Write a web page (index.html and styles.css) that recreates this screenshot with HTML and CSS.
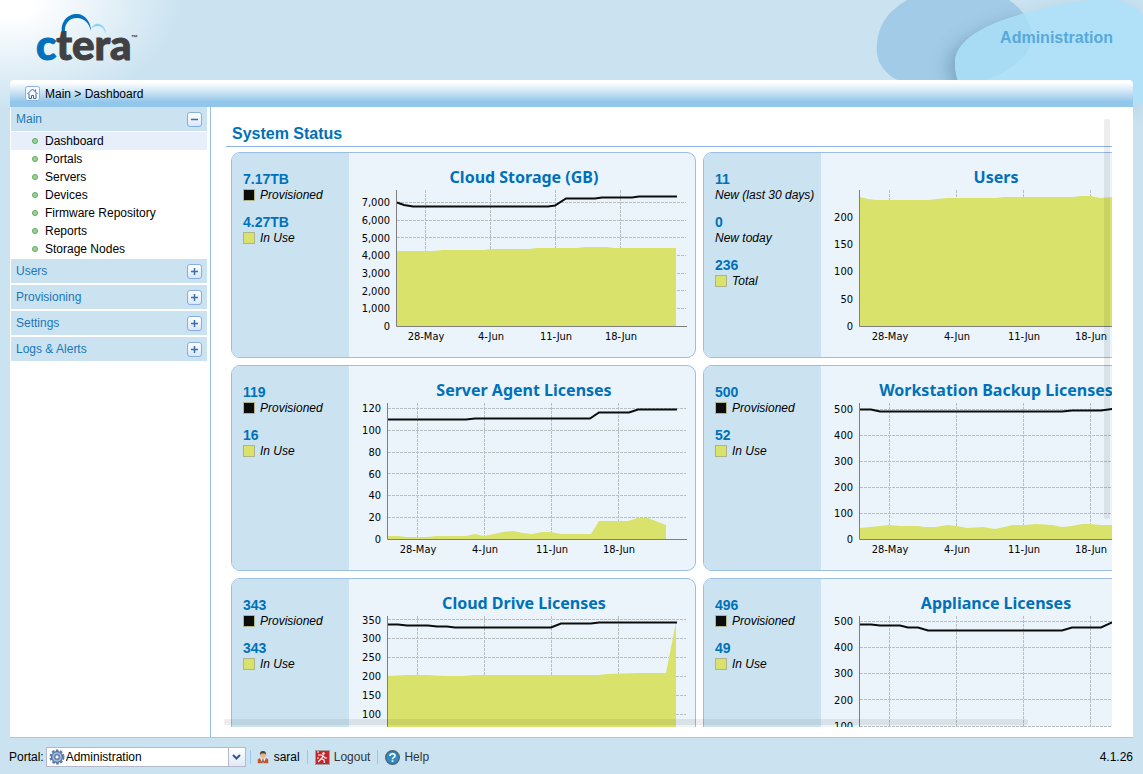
FILE: index.html
```html
<!DOCTYPE html>
<html lang="en">
<head>
<meta charset="utf-8">
<title>Administration - Dashboard</title>
<link rel="stylesheet" href="styles.css">
</head>
<body>
<svg class="backdrop" viewBox="0 0 849 510" aria-hidden="true">
  <defs>
    <clipPath id="rear"><path d="M50 150C50 70 90 25 160 -10H430C490 20 520 80 517 120C500 190 420 230 330 255L140 250C80 235 50 190 50 150Z"/></clipPath>
    <filter id="soft" x="-30%" y="-30%" width="160%" height="160%"><feGaussianBlur stdDeviation="26"/></filter>
  </defs>
  <path d="M285 190C285 130 350 80 495 40C600 10 700 -5 760 0C800 5 830 25 849 45V340H330C300 260 285 230 285 190Z" fill="#8ab4cf" opacity=".3" filter="url(#soft)"/>
  <path d="M50 150C50 70 90 25 160 -10H430C490 20 520 80 517 120C500 190 420 230 330 255L140 250C80 235 50 190 50 150Z" fill="#a2cbe7"/>
  <g clip-path="url(#rear)"><path d="M265 200C265 140 350 95 495 55V340H330C290 270 265 240 265 200Z" fill="#6f9db5" opacity=".8" filter="url(#soft)"/></g>
  <path d="M285 190C285 130 350 80 495 40C600 10 700 -5 760 0C800 5 830 25 849 45V306L819 318L600 340H330C300 260 285 230 285 190Z" fill="#b0e1f8"/>
  <g clip-path="url(#rear)"><path d="M285 190C285 130 350 80 495 40C600 10 700 -5 760 0V340H330C300 260 285 230 285 190Z" fill="#a8dcf4"/></g>
</svg>

<header class="top">
  <svg class="logo" width="110" height="76" viewBox="34 0 110 76" role="img" aria-label="ctera">
    <path d="M62 34C60 22 67 14 77 14C85 14 91 22 91 31C89 23 84 18 77 18C69 18 64 24 65 33Z" fill="#0071bc"/>
    <path d="M91 29C93 25 96 23 99 24C103 25 106 29 106 34C104 28 101 26 98 26C95 26 93 27 91 29Z" fill="#87d3f6"/>
    <text x="36" y="60" class="logo-text"><tspan fill="#0071bc" stroke="#0071bc">c</tspan><tspan fill="#414042" stroke="#414042">tera</tspan></text>
    <text x="131" y="40" class="logo-tm">™</text>
  </svg>
  <h1 class="product">Administration</h1>
</header>

<div class="frame">
  <nav class="crumbs" aria-label="Breadcrumb">
    <svg width="16" height="16" viewBox="0 0 16 16" aria-hidden="true">
      <rect x=".5" y=".5" width="14" height="14" rx="2" fill="#f4f9ff" stroke="#8db2e3"/>
      <path d="M2.500 8L7.500 3L12.500 8M4 7.500V12.500H6.500V9.500H8.500V12.500H11V7.500M10.500 5.500V3.500" fill="none" stroke="#3f6ba5"/>
    </svg>
    <span>Main &gt; Dashboard</span>
  </nav>

  <div class="body">
    <nav class="side" aria-label="Sections">
      <section>
        <h2>Main <button type="button" aria-label="Collapse Main"><svg width="15" height="15" viewBox="0 0 15 15"><path d="M4 7.500H11" stroke="#3c6ea8" stroke-width="1.500"/></svg></button></h2>
        <ul>
          <li class="on"><a href="#">Dashboard</a></li>
          <li><a href="#">Portals</a></li>
          <li><a href="#">Servers</a></li>
          <li><a href="#">Devices</a></li>
          <li><a href="#">Firmware Repository</a></li>
          <li><a href="#">Reports</a></li>
          <li><a href="#">Storage Nodes</a></li>
        </ul>
      </section>
      <section><h2>Users <button type="button" aria-label="Expand Users"><svg width="15" height="15" viewBox="0 0 15 15"><path d="M4 7.500H11M7.500 4V11" stroke="#3c6ea8" stroke-width="1.500"/></svg></button></h2></section>
      <section><h2>Provisioning <button type="button" aria-label="Expand Provisioning"><svg width="15" height="15" viewBox="0 0 15 15"><path d="M4 7.500H11M7.500 4V11" stroke="#3c6ea8" stroke-width="1.500"/></svg></button></h2></section>
      <section><h2>Settings <button type="button" aria-label="Expand Settings"><svg width="15" height="15" viewBox="0 0 15 15"><path d="M4 7.500H11M7.500 4V11" stroke="#3c6ea8" stroke-width="1.500"/></svg></button></h2></section>
      <section><h2>Logs &amp; Alerts <button type="button" aria-label="Expand Logs and Alerts"><svg width="15" height="15" viewBox="0 0 15 15"><path d="M4 7.500H11M7.500 4V11" stroke="#3c6ea8" stroke-width="1.500"/></svg></button></h2></section>
    </nav>

    <main class="content">
      <div class="scroll">
        <h2 class="heading">System Status</h2>
        <div class="panels">

          <article class="panel">
            <dl class="legend">
              <div><dt>7.17TB</dt><dd><i class="swatch black"></i>Provisioned</dd></div>
              <div><dt>4.27TB</dt><dd><i class="swatch"></i>In Use</dd></div>
            </dl>
            <svg class="chart" viewBox="0 0 346 204">
              <text class="title" x="175" y="30">Cloud Storage (GB)</text>
              <path class="grid" d="M48 49.500H337M48 67.500H337M48 84.500H337M48 102.500H337M48 120.500H337M48 137.500H337M48 155.500H337M76.500 37V173M141.500 37V173M206.500 37V173M271.500 37V173"/>
              <path class="area" d="M48 173V98H84L94 97H134L142 96H180L188 95H228L236 94H257L265 95H327V173Z"/>
              <path class="line" d="M48 49.500L55 52L64 53.500H199L206 52.500L217 45.500H246L253 44.500H283L290 43.500H328"/>
              <path class="axis" d="M47.500 37V173.500H338"/>
              <g class="ylab"><text x="41" y="53">7,000</text><text x="41" y="71">6,000</text><text x="41" y="89">5,000</text><text x="41" y="106">4,000</text><text x="41" y="124">3,000</text><text x="41" y="142">2,000</text><text x="41" y="159">1,000</text><text x="41" y="177">0</text></g>
              <g class="xlab"><text x="77" y="187">28-May</text><text x="142" y="187">4-Jun</text><text x="207" y="187">11-Jun</text><text x="272" y="187">18-Jun</text></g>
            </svg>
          </article>

          <article class="panel">
            <dl class="legend">
              <div><dt>11</dt><dd>New (last 30 days)</dd></div>
              <div><dt>0</dt><dd>New today</dd></div>
              <div><dt>236</dt><dd><i class="swatch"></i>Total</dd></div>
            </dl>
            <svg class="chart" viewBox="0 0 346 204">
              <text class="title" x="175" y="30">Users</text>
              <path class="grid" d="M68.500 37V173M135.500 37V173M202.500 37V173M269.500 37V173"/>
              <path class="area" d="M39 173V44L47 46L56 47H107L126 45H175L183 44H252L260 43H270L279 45L291 44H327V173Z"/>
              <path class="axis" d="M38.500 37V173.500H338"/>
              <g class="ylab"><text x="32" y="68">200</text><text x="32" y="95">150</text><text x="32" y="122">100</text><text x="32" y="150">50</text><text x="32" y="177">0</text></g>
              <g class="xlab"><text x="69" y="187">28-May</text><text x="136" y="187">4-Jun</text><text x="203" y="187">11-Jun</text><text x="270" y="187">18-Jun</text></g>
            </svg>
          </article>

          <article class="panel">
            <dl class="legend">
              <div><dt>119</dt><dd><i class="swatch black"></i>Provisioned</dd></div>
              <div><dt>16</dt><dd><i class="swatch"></i>In Use</dd></div>
            </dl>
            <svg class="chart" viewBox="0 0 346 204">
              <text class="title" x="175" y="30">Server Agent Licenses</text>
              <path class="grid" d="M39 42.500H337M39 64.500H337M39 86.500H337M39 107.500H337M39 129.500H337M39 151.500H337M68.500 37V173M135.500 37V173M202.500 37V173M269.500 37V173"/>
              <path class="area" d="M39 173V170H49L58 171H78L88 170H117L126 168L135 170L154 166L164 165L174 167L183 168L193 166H202L212 168H242L250 155H279L289 152H299L317 159V173Z"/>
              <path class="line" d="M39 53.500H117L126 52.500H241L250 46.500H280L289 43.500H328"/>
              <path class="axis" d="M38.500 37V173.500H338"/>
              <g class="ylab"><text x="32" y="46">120</text><text x="32" y="68">100</text><text x="32" y="90">80</text><text x="32" y="112">60</text><text x="32" y="133">40</text><text x="32" y="155">20</text><text x="32" y="177">0</text></g>
              <g class="xlab"><text x="69" y="187">28-May</text><text x="136" y="187">4-Jun</text><text x="203" y="187">11-Jun</text><text x="270" y="187">18-Jun</text></g>
            </svg>
          </article>

          <article class="panel">
            <dl class="legend">
              <div><dt>500</dt><dd><i class="swatch black"></i>Provisioned</dd></div>
              <div><dt>52</dt><dd><i class="swatch"></i>In Use</dd></div>
            </dl>
            <svg class="chart" viewBox="0 0 346 204">
              <text class="title" x="175" y="30">Workstation Backup Licenses</text>
              <path class="grid" d="M39 43.500H337M39 69.500H337M39 95.500H337M39 121.500H337M39 147.500H337M68.500 37V173M135.500 37V173M202.500 37V173M269.500 37V173"/>
              <path class="area" d="M39 173V162L59 160L68 159L79 160H97L104 161H115L126 159L136 160L146 162L162 161L174 163L192 159H204L215 158L231 159L241 161L251 160L261 158H269L280 159H327V173Z"/>
              <path class="line" d="M39 43.500H50L59 45.500H241L251 44.500H280L291 43H328"/>
              <path class="axis" d="M38.500 37V173.500H338"/>
              <g class="ylab"><text x="32" y="47">500</text><text x="32" y="73">400</text><text x="32" y="99">300</text><text x="32" y="125">200</text><text x="32" y="151">100</text><text x="32" y="177">0</text></g>
              <g class="xlab"><text x="69" y="187">28-May</text><text x="136" y="187">4-Jun</text><text x="203" y="187">11-Jun</text><text x="270" y="187">18-Jun</text></g>
            </svg>
          </article>

          <article class="panel">
            <dl class="legend">
              <div><dt>343</dt><dd><i class="swatch black"></i>Provisioned</dd></div>
              <div><dt>343</dt><dd><i class="swatch"></i>In Use</dd></div>
            </dl>
            <svg class="chart" viewBox="0 0 346 204">
              <text class="title" x="175" y="30">Cloud Drive Licenses</text>
              <path class="grid" d="M39 40.500H337M39 59.500H337M39 78.500H337M39 97.500H337M39 116.500H337M39 135.500H337M39 154.500H337M68.500 37V173M135.500 37V173M202.500 37V173M269.500 37V173"/>
              <path class="area" d="M39 173V97L58 96H78L96 97H113L126 96H249L259 95L289 94H317L327 43V173Z"/>
              <path class="line" d="M39 45.500H49L58 46.500H79L88 47.500H98L106 48.500H202L212 44.500H242L250 43.500H328"/>
              <path class="axis" d="M38.500 37V173.500H338"/>
              <g class="ylab"><text x="32" y="45">350</text><text x="32" y="63">300</text><text x="32" y="82">250</text><text x="32" y="101">200</text><text x="32" y="120">150</text><text x="32" y="139">100</text></g>
            </svg>
          </article>

          <article class="panel">
            <dl class="legend">
              <div><dt>496</dt><dd><i class="swatch black"></i>Provisioned</dd></div>
              <div><dt>49</dt><dd><i class="swatch"></i>In Use</dd></div>
            </dl>
            <svg class="chart" viewBox="0 0 346 204">
              <text class="title" x="175" y="30">Appliance Licenses</text>
              <path class="grid" d="M39 42.500H337M39 68.500H337M39 94.500H337M39 120.500H337M39 147.500H337M68.500 37V173M135.500 37V173M202.500 37V173M269.500 37V173"/>
              <path class="line" d="M39 45.500H50L59 46.500H79L87 48.500H97L107 51.500H241L251 48.500H280L291 43.500H328"/>
              <path class="axis" d="M38.500 37V173.500H338"/>
              <g class="ylab"><text x="32" y="46">500</text><text x="32" y="72">400</text><text x="32" y="98">300</text><text x="32" y="125">200</text><text x="32" y="151">100</text></g>
            </svg>
          </article>
        </div>
      </div>
      <div class="bar bar-v"></div>
      <div class="bar bar-h"></div>
    </main>
  </div>
</div>

<footer class="foot">
  <label for="portal">Portal:</label>
  <div class="combo">
    <svg class="gear" width="16" height="16" viewBox="0 0 16 16" aria-hidden="true">
      <circle cx="8" cy="8" r="6.500" fill="none" stroke="#5a7aa3" stroke-width="2" stroke-dasharray="2.600 1.500"/>
      <circle cx="8" cy="8" r="5.500" fill="#7d9cc4" stroke="#4f7099"/>
      <circle cx="8" cy="8" r="4" fill="none" stroke="#a9c1df"/>
      <circle cx="8" cy="8" r="2.200" fill="#fff" stroke="#46658c"/>
    </svg>
    <select id="portal"><option>Administration</option></select>
    <span class="arrow"><svg width="9" height="6" viewBox="0 0 9 6"><path d="M1 1L4.500 4.500L8 1" fill="none" stroke="#34568f" stroke-width="2"/></svg></span>
  </div>
  <span class="tool">
    <svg width="14" height="14" viewBox="0 0 14 16" aria-hidden="true">
      <path d="M1 15V11.500C1 10 3 9.500 5 9.200H9C11 9.500 13 10 13 11.500V15Z" fill="#c8552c"/>
      <path d="M3.500 9.500L7 15L10.500 9.500Z" fill="#fff"/>
      <path d="M6.500 10H7.500L8 14H6Z" fill="#444"/>
      <circle cx="7" cy="5.500" r="3.300" fill="#e8b48c"/>
      <path d="M3.500 6C3 2.500 4.500 1 7 1S11 2.500 10.500 6L9.500 4H4.800Z" fill="#4a4038"/>
    </svg>
    <span>saral</span>
  </span>
  <a class="tool" href="#">
    <svg width="15" height="15" viewBox="0 0 15 15" aria-hidden="true">
      <rect x=".5" y=".5" width="14" height="14" fill="#c1272d" stroke="#a89a9a"/>
      <circle cx="8.500" cy="3.500" r="1.200" fill="#fff"/>
      <path d="M3 5H6.500L8 6L6 9L3 12M6.500 8.500L9 10L9.500 13M8 6L10 8H12M2 2H4M2 8H4" fill="none" stroke="#fff" stroke-width="1.200"/>
    </svg>
    <span>Logout</span>
  </a>
  <a class="tool" href="#">
    <svg width="15" height="15" viewBox="0 0 15 15" aria-hidden="true">
      <circle cx="7.500" cy="7.500" r="6.800" fill="#2f8bc0" stroke="#4a6478" stroke-width="1.400"/>
      <path d="M5 6C5 3 10 3 10 5.800C10 7.500 7.500 7.300 7.500 9.300M7.500 10.300V12" fill="none" stroke="#fff" stroke-width="1.700"/>
    </svg>
    <span>Help</span>
  </a>
  <span class="version">4.1.26</span>
</footer>
</body>
</html>
```
FILE: styles.css
```css
* { box-sizing: border-box; }

body {
  margin: 0;
  height: 100vh;
  display: flex;
  flex-direction: column;
  overflow: hidden;
  position: relative;
  font: 12px/16px "Liberation Sans", Arial, sans-serif;
  color: #000;
  background: radial-gradient(ellipse 170px 110px at 10px 0, #fff 15%, rgba(255, 255, 255, 0) 100%) no-repeat, #cbe3f1;
}

h1, h2, ul, dl, dd { margin: 0; padding: 0; }
a { color: inherit; text-decoration: none; }

.backdrop {
  position: absolute;
  top: 0;
  right: 0;
  width: 283px;
  height: 170px;
}

.top {
  position: relative;
  flex: none;
  display: flex;
  justify-content: space-between;
  align-items: center;
  height: 80px;
  padding: 0 30px 4px 34px;
}
.logo-text { font: 900 42px Lato, sans-serif; stroke-width: 1px; }
.logo-tm { font: bold 7px "Liberation Sans", sans-serif; fill: #414042; }
.product { font-size: 16px; line-height: 20px; color: #57a9dc; }

.frame {
  position: relative;
  flex: 1;
  min-height: 0;
  display: flex;
  flex-direction: column;
  margin: 0 10px;
}

.crumbs {
  flex: none;
  display: flex;
  align-items: center;
  gap: 4px;
  height: 27px;
  padding-left: 15px;
  border-radius: 4px 4px 0 0;
  background: linear-gradient(#fff 10%, #92c6ea 82%);
}

.body {
  flex: 1;
  min-height: 0;
  display: flex;
  background: #fff;
  border-bottom: 1px solid #a3cbe5;
}

.side {
  flex: none;
  display: flex;
  flex-direction: column;
  gap: 2px;
  width: 201px;
  padding: 0 3px 0 1px;
  border-right: 1px solid #93bfe8;
}
.side h2 {
  display: flex;
  align-items: center;
  justify-content: space-between;
  height: 24px;
  padding: 0 5px;
  font-size: 12px;
  font-weight: normal;
  color: #1878b9;
  background: #cbe3f1;
}
.side button {
  width: 15px;
  height: 15px;
  padding: 0;
  border: 1px solid #86aee2;
  border-radius: 3px;
  background: linear-gradient(#fff, #d8e8fb);
  display: flex;
  align-items: center;
  justify-content: center;
}
.side button svg { flex: none; }
.side ul { list-style: none; margin: 1px 0 -1px; }
.side li {
  display: flex;
  align-items: center;
  gap: 7px;
  height: 18px;
  padding-left: 21px;
}
.side li::before {
  content: "";
  box-sizing: border-box;
  width: 6px;
  height: 6px;
  border-radius: 50%;
  border: 1px solid #5da860;
  background: #9bd491;
}
.side li.on { background: #e7effb; }

.content {
  position: relative;
  flex: 1;
  min-width: 0;
  padding: 11px 21px 10px 15px;
}
.scroll {
  height: 100%;
  overflow: auto;
  scrollbar-width: none;
}
.heading {
  min-width: 100%;
  height: 29px;
  padding: 6px 0 0 6px;
  font-size: 16px;
  line-height: 20px;
  color: #0071b8;
  border-bottom: 1px solid #8fb3e6;
}
.panels {
  display: grid;
  grid-template-columns: repeat(2, 465px);
  gap: 7px;
  padding: 5px 0 5px 5px;
}
.panel {
  display: flex;
  height: 206px;
  border: 1px solid #9bbde6;
  border-radius: 9px;
  overflow: hidden;
  background: #ebf4fb;
}
.legend {
  flex: none;
  display: flex;
  flex-direction: column;
  gap: 11px;
  width: 117px;
  padding: 18px 0 0 11px;
  background: #cbe3f1;
  white-space: nowrap;
}
.legend dt { font-size: 14px; font-weight: bold; color: #0071b8; }
.legend dd { display: flex; align-items: center; gap: 5px; font-style: italic; }
.swatch { width: 12px; height: 12px; border: 1px solid #b0b48a; background: #d9e26a; }
.swatch.black { background: #0c0c0c; }

.chart { flex: 1; min-width: 0; height: 204px; }
.title {
  font: bold 16px "Noto Sans", "Open Sans", sans-serif;
  fill: #0071b8;
  text-anchor: middle;
}
.ylab, .xlab { font: 11px "DejaVu Sans Condensed", "Open Sans", sans-serif; fill: #000; }
.ylab { text-anchor: end; }
.xlab { text-anchor: middle; }
.grid { fill: none; stroke: #b6bfc2; stroke-dasharray: 3 1; }
.area { fill: #d9e26a; }
.line { fill: none; stroke: #0c0c0c; stroke-width: 2; }
.axis { fill: none; stroke: #7f7f7f; }

.bar { position: absolute; background: rgba(0, 0, 0, .07); border-radius: 2px; }
.bar-v { top: 12px; right: 23px; width: 6px; height: 400px; }
.bar-h { left: 13px; right: 105px; bottom: 12px; height: 6px; }

.foot {
  flex: none;
  display: flex;
  align-items: center;
  height: 36px;
  padding: 2px 10px 0 9px;
}
.combo { position: relative; width: 200px; margin-left: 2px; }
.combo select {
  appearance: none;
  display: block;
  width: 100%;
  height: 20px;
  padding: 0 20px 0 19px;
  border: 1px solid #b3b8cc;
  border-radius: 0;
  background: #fff;
  font: inherit;
  color: #000;
}
.gear { position: absolute; left: 3px; top: 2px; }
.arrow {
  position: absolute;
  top: 1px;
  right: 1px;
  width: 17px;
  height: 18px;
  display: grid;
  place-items: center;
  border-left: 1px solid #b3b8cc;
  background: linear-gradient(#fff, #dfe9f5);
  pointer-events: none;
}
.tool {
  display: flex;
  align-items: center;
  gap: 4px;
  height: 14px;
  margin-left: 4px;
  padding-left: 5px;
  border-left: 1px solid #9cc6ee;
}
.tool + .tool { margin-left: 7px; padding-left: 7px; }
a.tool { color: #333; }
.version { margin-left: auto; }
```
